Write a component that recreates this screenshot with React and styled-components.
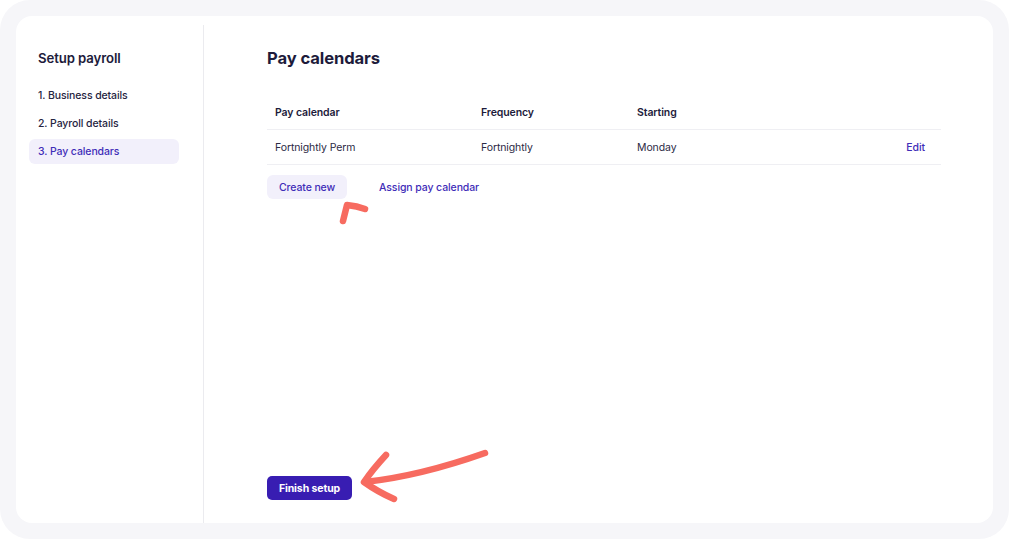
import React from "react";
import styled, { createGlobalStyle } from "styled-components";

const Global = createGlobalStyle`
  html, body { margin: 0; padding: 0; background: #ffffff; }
  body { font-family: Inter, "Noto Sans", sans-serif; -webkit-font-smoothing: antialiased; }
  * { box-sizing: border-box; }
`;

const Frame = styled.div`
  position: relative;
  width: 1009px;
  height: 539px;
  background: #f6f6f9;
  border-radius: 30px;
  padding: 16px;
`;

const Card = styled.div`
  display: flex;
  height: 100%;
  background: #ffffff;
  border-radius: 16px;
  overflow: hidden;
`;

const Sidebar = styled.aside`
  width: 188px;
  flex-shrink: 0;
  margin-top: 9px;
  border-right: 1px solid #ebebef;
  padding: 23px 24px 0 13px;
`;

const SideTitle = styled.h2`
  margin: 0 0 15px 9px;
  font-size: 13.2px;
  letter-spacing: -0.1px;
  line-height: 20px;
  font-weight: 600;
  color: #1d1b3b;
`;

const NavList = styled.nav`
  display: flex;
  flex-direction: column;
  gap: 3px;
`;

const NavItem = styled.div`
  height: 25px;
  display: flex;
  align-items: center;
  padding: 0 9px;
  border-radius: 6px;
  font-size: 10.5px;
  letter-spacing: -0.1px;
  font-weight: 500;
  color: ${(p) => (p.$active ? "#3f2db8" : "#26243f")};
  background: ${(p) => (p.$active ? "#f2f0fb" : "transparent")};
`;

const Main = styled.main`
  flex: 1;
  display: flex;
  flex-direction: column;
  padding: 30px 52px 23px 63px;
`;

const Heading = styled.h1`
  margin: 0 0 25px 0;
  font-size: 16.6px;
  letter-spacing: -0.1px;
  line-height: 24px;
  font-weight: 700;
  color: #1d1b3b;
`;

const Row = styled.div`
  display: grid;
  grid-template-columns: 206px 156px 1fr auto;
  align-items: center;
  height: 35px;
  padding: 0 16px 0 8px;
  border-bottom: 1px solid #efeff3;
  font-size: 10.5px;
  letter-spacing: -0.1px;
  font-weight: ${(p) => (p.$head ? 600 : 400)};
  color: ${(p) => (p.$head ? "#1d1b3b" : "#2c2a45")};
`;

const LinkText = styled.span`
  color: #3f2db8;
  font-weight: 500;
`;

const Actions = styled.div`
  display: flex;
  align-items: center;
  gap: 32px;
  margin-top: 10px;
`;

const SoftButton = styled.button`
  height: 24px;
  width: 80px;
  border: none;
  border-radius: 6px;
  background: #f2f0fb;
  color: #3f2db8;
  font-family: inherit;
  font-size: 10.5px;
  letter-spacing: -0.1px;
  font-weight: 500;
  padding: 0;
`;

const TextButton = styled.button`
  border: none;
  background: none;
  padding: 0;
  color: #3f2db8;
  font-family: inherit;
  font-size: 10.5px;
  letter-spacing: -0.1px;
  font-weight: 500;
`;

const PrimaryButton = styled.button`
  margin-top: auto;
  align-self: flex-start;
  height: 24px;
  width: 85px;
  border: none;
  border-radius: 5px;
  background: #381db2;
  color: #ffffff;
  font-family: inherit;
  font-size: 10.5px;
  letter-spacing: -0.1px;
  font-weight: 700;
  padding: 0;
`;

const Overlay = styled.svg`
  position: absolute;
  left: 0;
  top: 0;
  pointer-events: none;
`;

export default function App() {
  return (
    <>
      <Global />
      <Frame>
        <Card>
          <Sidebar>
            <SideTitle>Setup payroll</SideTitle>
            <NavList>
              <NavItem>1. Business details</NavItem>
              <NavItem>2. Payroll details</NavItem>
              <NavItem $active>3. Pay calendars</NavItem>
            </NavList>
          </Sidebar>
          <Main>
            <Heading>Pay calendars</Heading>
            <Row $head>
              <span>Pay calendar</span>
              <span>Frequency</span>
              <span>Starting</span>
              <span />
            </Row>
            <Row>
              <span>Fortnightly Perm</span>
              <span>Fortnightly</span>
              <span>Monday</span>
              <LinkText>Edit</LinkText>
            </Row>
            <Actions>
              <SoftButton>Create new</SoftButton>
              <TextButton>Assign pay calendar</TextButton>
            </Actions>
            <PrimaryButton>Finish setup</PrimaryButton>
          </Main>
        </Card>
        <Overlay width="1009" height="539" viewBox="0 0 1009 539">
          <g fill="none" stroke="#f76b60" strokeWidth="6.5" strokeLinecap="round" strokeLinejoin="round">
            <path d="M343 221 L347 205 Q357 206 365 209" />
            <path d="M485 453 Q420 476 365 482" />
            <path d="M386 455 Q373 469 364 482 Q378 492 394 499" />
          </g>
        </Overlay>
      </Frame>
    </>
  );
}
